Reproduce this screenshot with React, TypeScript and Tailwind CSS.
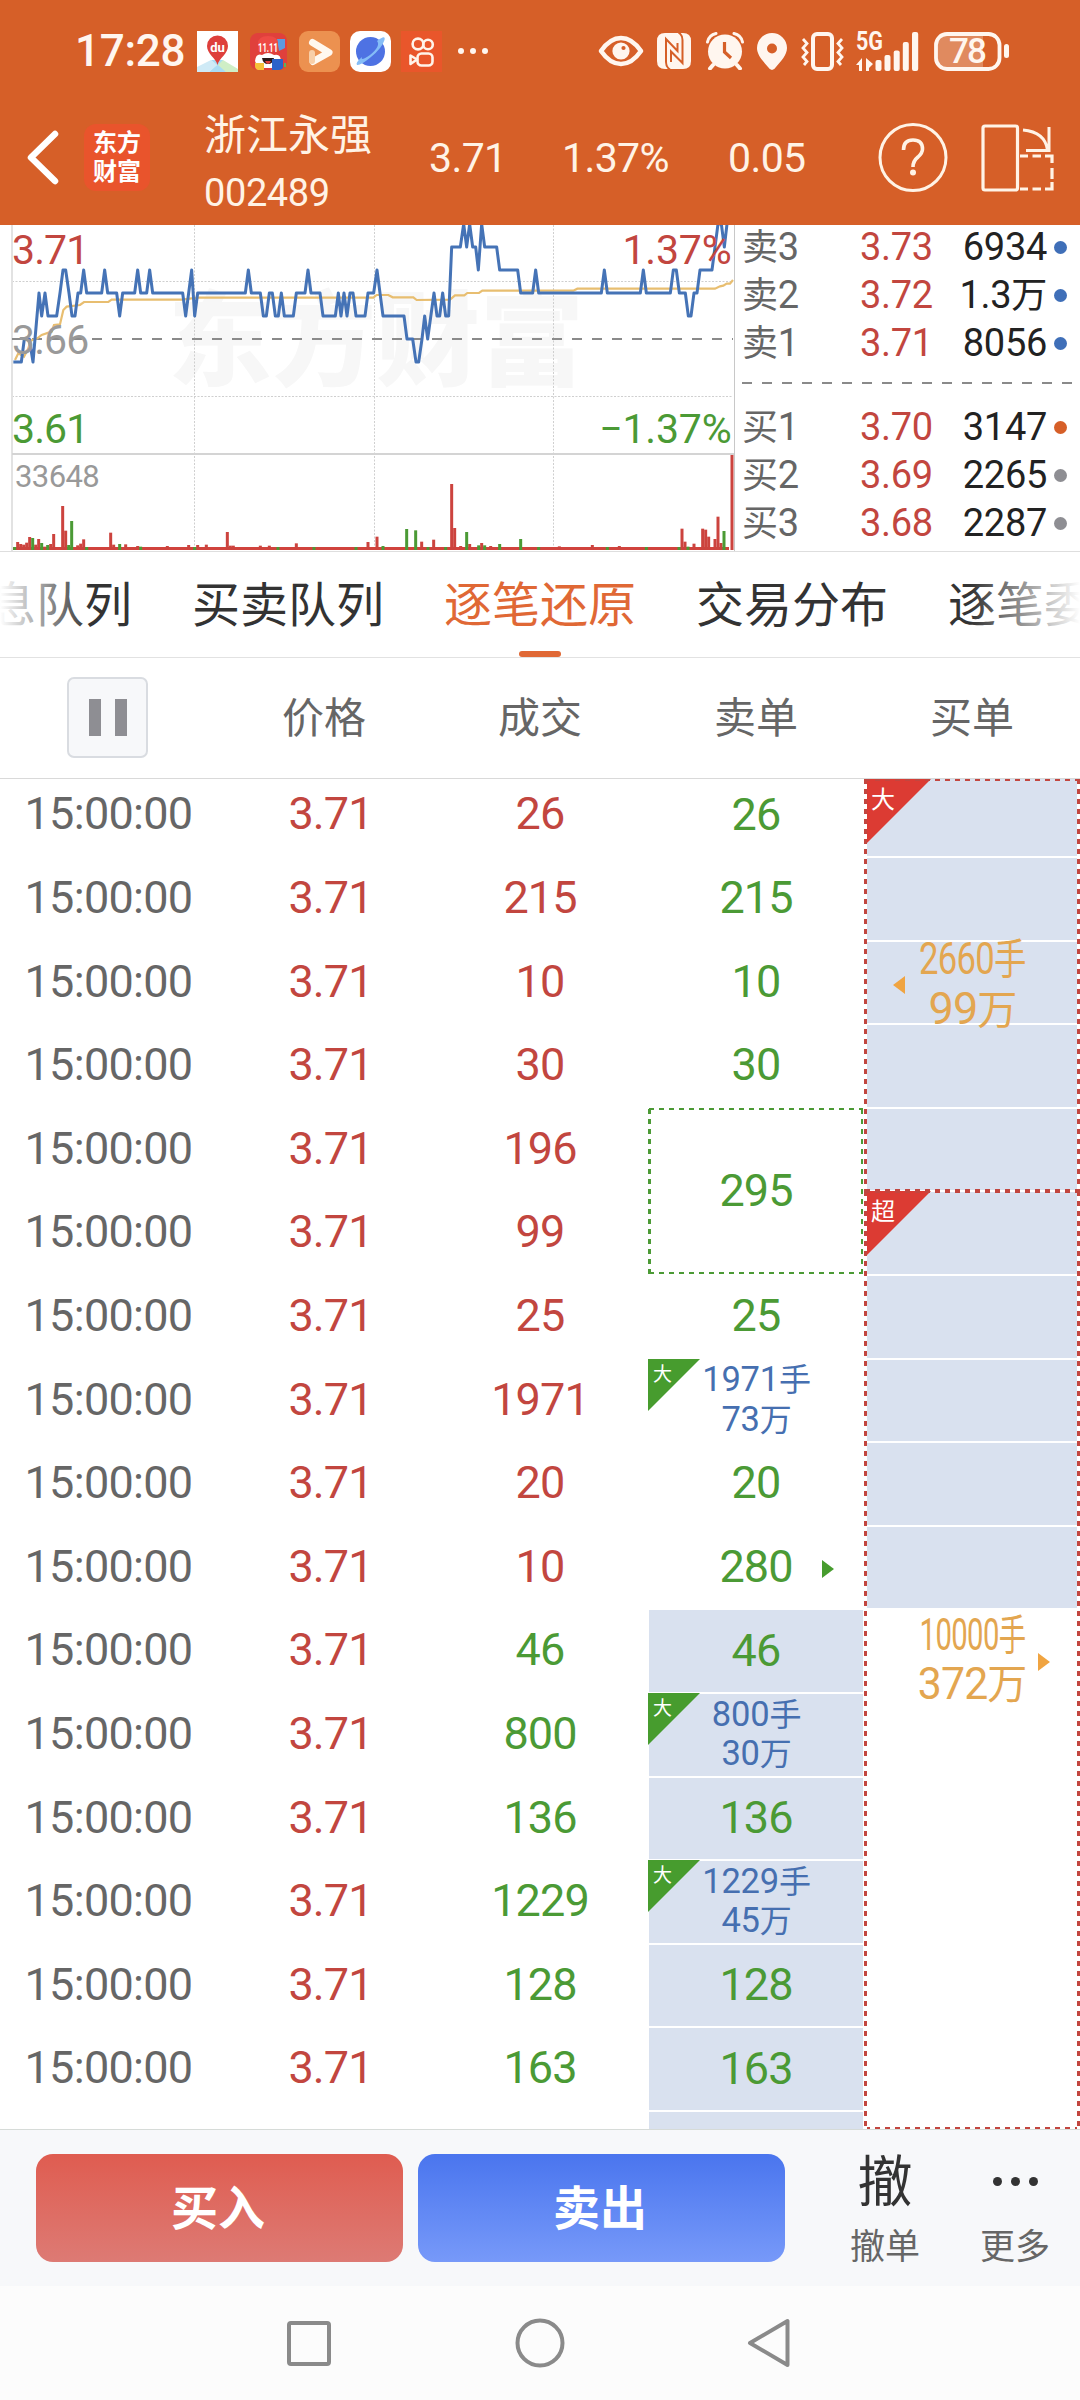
import type { ReactNode } from 'react';

type Side = 'buy' | 'sell';

interface Trade {
  time: string;
  price: string;
  volume: string;
  side: Side;
}

interface SellCell {
  text: string;
  amount?: string;
  rows?: number;
  arrow?: boolean;
  shaded?: boolean;
}

const volumes: [string, Side][] = [
  ['26', 'buy'], ['215', 'buy'], ['10', 'buy'], ['30', 'buy'], ['196', 'buy'], ['99', 'buy'],
  ['25', 'buy'], ['1971', 'buy'], ['20', 'buy'], ['10', 'buy'], ['46', 'sell'], ['800', 'sell'],
  ['136', 'sell'], ['1229', 'sell'], ['128', 'sell'], ['163', 'sell'],
];

const trades: Trade[] = volumes.map(([volume, side]) => ({ time: '15:00:00', price: '3.71', volume, side }));

const sellCells: SellCell[] = [
  { text: '26' },
  { text: '215' },
  { text: '10' },
  { text: '30' },
  { text: '295', rows: 2 },
  { text: '25' },
  { text: '1971', amount: '73' },
  { text: '20' },
  { text: '280', arrow: true },
  { text: '46', shaded: true },
  { text: '800', amount: '30', shaded: true },
  { text: '136', shaded: true },
  { text: '1229', amount: '45', shaded: true },
  { text: '128', shaded: true },
  { text: '163', shaded: true },
  { text: '', shaded: true },
];

const asks = [
  { label: '卖3', price: '3.73', amount: '6934', dot: 'bg-[#3f6fb8]' },
  { label: '卖2', price: '3.72', amount: '1.3万', dot: 'bg-[#3f6fb8]' },
  { label: '卖1', price: '3.71', amount: '8056', dot: 'bg-[#3f6fb8]' },
];

const bids = [
  { label: '买1', price: '3.70', amount: '3147', dot: 'bg-[#d65f28]' },
  { label: '买2', price: '3.69', amount: '2265', dot: 'bg-[#8e8e93]' },
  { label: '买3', price: '3.68', amount: '2287', dot: 'bg-[#8e8e93]' },
];

// [x in thirds of a pixel, ticks above the previous close]
const priceSeries = [
  [40, -1], [64, -1], [73, 0], [88, 0], [99, -1], [117, 2], [125, 1], [135, 2], [144, 1], [170, 1],
  [180, 2], [189, 3], [197, 3], [207, 2], [216, 1], [225, 1], [234, 2], [242, 2], [251, 3], [260, 2],
  [305, 2], [314, 3], [323, 2], [350, 2], [359, 1], [368, 2], [404, 2], [413, 3], [422, 2], [440, 2],
  [449, 3], [458, 2], [548, 2], [557, 1], [575, 3], [584, 1], [593, 2], [736, 2], [745, 3], [754, 2],
  [781, 2], [790, 1], [799, 1], [808, 2], [817, 2], [826, 1], [835, 1], [844, 2], [853, 1], [880, 1],
  [889, 2], [915, 2], [924, 3], [933, 2], [960, 2], [969, 1], [1006, 1], [1015, 2], [1023, 1], [1032, 2],
  [1041, 1], [1050, 2], [1059, 2], [1068, 1], [1095, 1], [1104, 2], [1121, 2], [1131, 3], [1149, 1], [1212, 1],
  [1221, 0], [1238, 0], [1248, -1], [1256, -1], [1266, 0], [1274, 1], [1283, 0], [1302, 2], [1311, 1], [1319, 1],
  [1328, 2], [1337, 1], [1346, 1], [1355, 4], [1381, 4], [1391, 5], [1400, 4], [1409, 5], [1418, 4], [1427, 4],
  [1435, 3], [1445, 5], [1454, 4], [1490, 4], [1499, 3], [1553, 3], [1562, 2], [1598, 2], [1607, 3], [1616, 2],
  [1804, 2], [1813, 3], [1822, 2], [1921, 2], [1930, 3], [1939, 2], [2011, 2], [2020, 3], [2029, 3], [2038, 2],
  [2056, 2], [2065, 1], [2073, 1], [2082, 2], [2091, 2], [2100, 3], [2136, 3], [2145, 4], [2154, 5], [2164, 5],
  [2173, 4], [2181, 5],
];

// [x, y] in thirds of a pixel
const averageSeries = [
  [45, 405], [55, 385], [72, 395], [85, 370], [92, 347], [112, 340], [125, 330], [155, 320], [162, 300], [180, 298],
  [190, 255], [200, 245], [240, 240], [252, 231], [325, 231], [335, 224], [545, 224], [593, 218], [1120, 218], [1130, 210],
  [1165, 210], [1178, 217], [1240, 217], [1250, 225], [1350, 224], [1365, 211], [1393, 211], [1402, 204], [1437, 204], [1447, 197],
  [1720, 197], [1732, 191], [2145, 191], [2160, 184], [2170, 182], [2180, 176], [2190, 176], [2199, 165],
];

// [x, height] in thirds of a pixel
const upBars = [
  [53, 24], [62, 18], [71, 16], [80, 22], [89, 39], [107, 16], [116, 33], [134, 10], [152, 18], [161, 48],
  [188, 132], [197, 58], [233, 14], [242, 19], [251, 32], [332, 52], [341, 16], [377, 17], [413, 12], [502, 12],
  [566, 15], [593, 15], [619, 16], [682, 54], [691, 13], [700, 13], [781, 13], [808, 13], [889, 20], [1104, 24],
  [1131, 40], [1265, 25], [1301, 31], [1355, 198], [1364, 66], [1382, 12], [1409, 18], [1445, 21], [1472, 12], [1678, 11],
  [1777, 15], [1858, 12], [2046, 64], [2055, 25], [2082, 19], [2108, 64], [2117, 61], [2126, 40], [2145, 33], [2154, 100],
  [2163, 21], [2196, 285],
];
const downBars = [
  [44, 9], [98, 36], [125, 21], [143, 15], [206, 15], [215, 87], [260, 9], [359, 18], [422, 10], [584, 9],
  [834, 9], [942, 9], [1068, 9], [1149, 12], [1220, 63], [1247, 59], [1284, 9], [1337, 9], [1400, 54], [1436, 14],
  [1454, 14], [1499, 18], [1562, 33], [1616, 9], [1822, 9], [1939, 9], [2037, 9], [2064, 10], [2172, 57],
];

const pricePoints = priceSeries.map(([x, t]) => `${x / 3},${114 - t * 23}`).join(' ');
const averagePoints = averageSeries.map(([x, y]) => `${x / 3},${y / 3}`).join(' ');

function StatusBar() {
  return (
    <div className="flex h-[102px] items-center pl-[75px] pr-[70px] text-[#fff6ef]">
      <span className="w-[122px] text-[44px] font-medium leading-none tracking-[-0.3px]">17:28</span>
      <div className="flex items-center gap-[10px]">
        <svg width="41" height="41" viewBox="0 0 41 41">
          <rect width="41" height="41" fill="#fff" />
          <path d="M0 36 L14 29 L20 34 L12 41 H0Z" fill="#cfeaf6" />
          <path d="M14 29 H26 L29 41 H12 L20 34Z" fill="#a9dcf3" />
          <path d="M26 29 L41 38 V41 H29 L21 34Z" fill="#cfeec6" />
          <path d="M20.500 34 C19 27 10 23 10 15 A10.500 10.500 0 0 1 31 15 C31 23 22 27 20.500 34Z" fill="#de3f3b" />
          <text x="20.500" y="21" fontSize="13" fontWeight="700" textAnchor="middle" fill="#fff">du</text>
        </svg>
        <svg width="41" height="41" viewBox="0 0 41 41">
          <rect x="2" y="2" width="37" height="37" rx="8" fill="#e0403c" />
          <path d="M29 8 h8 v9 l-6 3z" fill="#5b9be0" />
          <path d="M10 20 V13 Q10 5 20 5 Q30 5 30 13 V20Z" fill="#ee4a45" />
          <text x="20" y="21" fontSize="12" fontWeight="700" textAnchor="middle" fill="#fff" textLength="20" lengthAdjust="spacingAndGlyphs">11.11</text>
          <path d="M7 30 Q8 22 14 24 Q20 20 26 24 Q33 22 33 31 L28 37 H10Z" fill="#fff" />
          <path d="M14 27 h12 q-1 6 -6 6 q-5 0 -6 -6z" fill="#2b1a1a" />
          <path d="M17 30 h6 q-1 3 -3 3 q-2 0 -3 -3z" fill="#e0403c" />
          <path d="M7 32 h9 v7 h-6 q-3 -1 -3 -4z" fill="#f6c13a" />
          <path d="M24 28 h11 v9 q-2 2 -4 2 h-7z" fill="#2c62c9" />
          <path d="M36 32 h2 v4 h-2z" fill="#58b35c" />
        </svg>
        <svg width="41" height="41" viewBox="0 0 41 41">
          <rect width="41" height="41" rx="9" fill="#ec9150" />
          <path d="M13.500 11.500 L30 21.500 L14 30.500" stroke="#fff8ef" strokeWidth="7" fill="none" strokeLinecap="round" strokeLinejoin="round" />
          <path d="M13 22 v8" stroke="#f8cfa8" strokeWidth="6" strokeLinecap="round" />
        </svg>
        <svg width="41" height="41" viewBox="0 0 41 41">
          <rect width="41" height="41" rx="10" fill="#fff" />
          <circle cx="20.500" cy="20.500" r="14.500" fill="#4e72e3" />
          <path d="M27 10 Q36 3 34.500 9 Q32 17 21 26 Q10 35 7 34 Q5 32 12 26 Q10 31 20 24 Q31 15 27 10Z" fill="#85bdf7" />
        </svg>
        <svg width="41" height="41" viewBox="0 0 41 41" fill="none" stroke="#fff3ea" strokeWidth="2.600">
          <rect width="41" height="41" fill="#e9562b" stroke="none" />
          <circle cx="17" cy="13" r="5.400" />
          <circle cx="27" cy="13.500" r="4.800" />
          <rect x="16.500" y="22.500" width="15" height="12" rx="4" />
          <path d="M16 28.500 L9.500 24.500 V33Z" strokeLinejoin="round" />
        </svg>
      </div>
      <div className="ml-[16px] flex gap-[6px]">
        <span className="size-[6px] rounded-full bg-[#fff6ef]" />
        <span className="size-[6px] rounded-full bg-[#fff6ef]" />
        <span className="size-[6px] rounded-full bg-[#fff6ef]" />
      </div>

      <div className="ml-auto flex items-center">
        <svg className="mr-[13px]" width="46" height="32" viewBox="0 0 46 32">
          <path d="M3 16 Q12 3 23 3 Q34 3 43 16 Q34 29 23 29 Q12 29 3 16Z" fill="none" stroke="currentColor" strokeWidth="4.600" strokeLinejoin="round" />
          <circle cx="23" cy="16" r="8.600" fill="currentColor" />
          <circle cx="25.500" cy="13" r="2.100" fill="#d65f28" />
        </svg>
        <svg className="mr-[15px]" width="34" height="36" viewBox="0 0 34 36">
          <path d="M8 0 H26 Q34 0 34 8 V28 Q34 36 26 36 H8 Q0 36 0 28 V8 Q0 0 8 0Z" fill="currentColor" />
          <path d="M13 36.500 Q9 34 9 29 V6 L20.500 18 V10 M21.500 -0.500 Q25.500 2 25.500 7 V30 L14 18.500 V29" stroke="#d65f28" strokeWidth="2" fill="none" />
        </svg>
        <svg className="mr-[13px]" width="38" height="38" viewBox="0 0 38 38">
          <circle cx="19" cy="19.500" r="17" fill="currentColor" />
          <path d="M1.500 10 Q3 3 10 1.500 M36.500 10 Q35 3 28 1.500" stroke="currentColor" strokeWidth="3" fill="none" strokeLinecap="round" />
          <path d="M7 33 L4 36.500 M31 33 L34 36.500" stroke="currentColor" strokeWidth="4" strokeLinecap="round" />
          <path d="M18.500 10 V20 L25 26" stroke="#d65f28" strokeWidth="3.200" fill="none" />
        </svg>
        <svg className="mr-[14px]" width="30" height="37" viewBox="0 0 30 37">
          <path d="M15 37 Q13 37 11 34 C6 28 0 22 0 15 A15 15 0 0 1 30 15 C30 22 24 28 19 34 Q17 37 15 37Z" fill="currentColor" />
          <circle cx="15" cy="15.500" r="5" fill="#d65f28" />
        </svg>
        <svg className="mr-[12px]" width="43" height="39" viewBox="0 0 43 39" fill="none" stroke="currentColor">
          <rect x="12" y="2" width="19" height="35" rx="4" strokeWidth="4" />
          <path d="M2 7 L6 11.500 L2 16 L6 20.500 L2 25 L6 29.500 L3 33 M41 7 L37 11.500 L41 16 L37 20.500 L41 25 L37 29.500 L40 33" strokeWidth="2.800" />
        </svg>
        <div className="relative mr-[15px] h-[39px] w-[63px]">
          <svg width="63" height="39" viewBox="0 0 63 39" fill="currentColor">
            <path d="M6 26 V39 H3 V33 H0Z M10 26 L17 32 L13 36 V39 H10Z" />
            <rect x="19.500" y="28" width="6" height="11" rx="2" />
            <rect x="28.500" y="23" width="6" height="16" rx="2" />
            <rect x="37.700" y="18.500" width="6" height="20.500" rx="2" />
            <rect x="46.800" y="10" width="6" height="29" rx="2" />
            <rect x="56" y="0" width="6.200" height="39" rx="2" />
          </svg>
          <span className="absolute left-0 top-[-5px] origin-left scale-x-[0.86] text-[25px] font-bold leading-[30px]">5G</span>
        </div>
        <div className="relative h-[39px] w-[76px]">
          <svg width="76" height="39" viewBox="0 0 76 39">
            <path d="M10 3 H49 V36 H10 Q3 34 3 27 V10 Q3 4 10 3Z" fill="#e08a5f" />
            <rect x="2" y="2" width="63.500" height="35" rx="11" fill="none" stroke="currentColor" strokeWidth="3.800" />
            <rect x="70" y="12" width="5" height="14" rx="2.500" fill="currentColor" />
          </svg>
          <span className="absolute left-0 top-[-2px] w-[66px] text-center text-[35px] font-medium leading-[43px] tracking-[-2px]">78</span>
        </div>
      </div>
    </div>
  );
}

function TitleBar() {
  return (
    <div className="flex h-[123px] pl-[26px] text-[#fff3e6]">
      <svg className="mt-[26px] shrink-0" width="36" height="60" viewBox="0 0 36 60">
        <path d="M29 6 L5 29.500 L29 53" fill="none" stroke="#fff" strokeWidth="6.500" strokeLinecap="round" strokeLinejoin="round" />
      </svg>
      <div className="ml-[22px] mt-[22px] flex h-[67px] w-[66px] shrink-0 flex-col items-center justify-center rounded-[12px] bg-[#e9542c] text-[24px] font-bold leading-[29px] text-white">
        <span>东方</span>
        <span>财富</span>
      </div>
      <div className="ml-[54px] w-[225px]">
        <p className="mt-[10px] text-[42px] leading-[48px]">浙江永强</p>
        <p className="mt-[9px] text-[38px] leading-[48px] tracking-[-0.4px]">002489</p>
      </div>
      <div className="flex h-[113px] items-center text-[41px] tracking-[-0.6px]">
        <span className="w-[133px]">3.71</span>
        <span className="w-[166px]">1.37%</span>
        <span className="w-[150px]">0.05</span>
      </div>
      <svg className="mt-[20px]" width="70" height="70" viewBox="0 0 70 70">
        <circle cx="35" cy="35.500" r="33" fill="none" stroke="currentColor" strokeWidth="3" />
        <path d="M25.500 28 Q25.500 18 35 18 Q44.500 18 44.500 27 Q44.500 31 40 35 Q35 39 35 45" fill="none" stroke="currentColor" strokeWidth="3.600" />
        <circle cx="35" cy="50.500" r="3" fill="currentColor" />
      </svg>
      <svg className="ml-[33px] mt-[21px]" width="74" height="70" viewBox="0 0 74 70" fill="none" stroke="currentColor" strokeWidth="3.200">
        <rect x="2" y="3" width="34.500" height="64" rx="2" />
        <path d="M42 7 Q64 9 66.500 27 M68 4 V27.500 H45" strokeWidth="3" />
        <path d="M39 33 H47 M51.500 33 H60 M64 33 H71 V40 M71 45 V56 M71 59 V66 H64 M60 66 H51.500 M47 66 H39" />
      </svg>
    </div>
  );
}

function Chart() {
  return (
    <div className="relative h-[326px] w-[735px] shrink-0">
      <svg width="735" height="326" viewBox="0 0 735 326" className="block">
        <text x="168" y="153" fontSize="103" fontWeight="900" fill="#f7f7f7" textLength="416" lengthAdjust="spacingAndGlyphs">东方财富</text>
        <path d="M12 56.500 H733 M12 171.500 H733 M194.500 0 V325 M374.500 0 V325 M553.500 0 V325" stroke="#cfcfcf" strokeWidth="1" strokeDasharray="2 1.500" />
        <path d="M12 0 V326" stroke="#e2e2e2" strokeWidth="2" />
        <path d="M734.500 0 V326" stroke="#c8c8c8" strokeWidth="1" />
        <path d="M12 229 H734" stroke="#d4d4d4" strokeWidth="2" />
        <path d="M12 114 H733" stroke="#8a8a8a" strokeWidth="2" strokeDasharray="10 10" />
        <polyline points={averagePoints} fill="none" stroke="#e8be70" strokeWidth="2.200" />
        <rect x="13" y="322" width="716" height="3" fill="#d0433d" />
        {upBars.map(([x, h]) => (
          <rect key={x} x={x / 3 - 1.5} y={325 - h / 3} width="3" height={h / 3} fill="#cc433e" />
        ))}
        {downBars.map(([x, h]) => (
          <rect key={x} x={x / 3 - 1.5} y={325 - h / 3} width="3" height={h / 3} fill="#4b9a35" />
        ))}
        <polyline points={pricePoints} fill="none" stroke="#4573b6" strokeWidth="3" strokeLinejoin="round" />
        <g fontSize="41" letterSpacing="-0.9">
          <text x="12" y="39" fill="#c2463f">3.71</text>
          <text x="12" y="128.500" fill="#999">3.66</text>
          <text x="12" y="217.500" fill="#4b9a35">3.61</text>
        </g>
        <g fontSize="41" letterSpacing="-0.2">
          <text x="731.500" y="39" textAnchor="end" fill="#c2463f">1.37%</text>
          <text x="731.500" y="217.500" textAnchor="end" fill="#4b9a35">−1.37%</text>
        </g>
        <text x="15" y="261.500" fontSize="31" letterSpacing="-0.6" fill="#999">33648</text>
      </svg>
    </div>
  );
}

function QuoteRow({ label, price, amount, dot }: { label: string; price: string; amount: string; dot: string }) {
  const inWan = amount.endsWith('万');

  return (
    <div className="flex h-[48px] items-center text-[38px] leading-[48px] tracking-[-0.3px]">
      <span className="w-[118px] text-[#666]">
        <span className="text-[36px]">{label[0]}</span>
        {label[1]}
      </span>
      <span className="w-[76px] text-[#c2463f]">{price}</span>
      <span className="w-[111px] text-right text-[#222]">
        {inWan ? amount.slice(0, -1) : amount}
        {inWan && <span className="text-[36px]">万</span>}
      </span>
      <span className={`ml-[7px] size-[13px] rounded-full ${dot}`} />
    </div>
  );
}

function OrderBook() {
  return (
    <div className="pl-[7px]">
      <div className="-mt-[2px]">
        {asks.map((row) => (
          <QuoteRow key={row.label} {...row} />
        ))}
      </div>
      <div className="mb-[19px] mt-[15px] h-[2px] w-[332px] bg-[repeating-linear-gradient(to_right,#8a8a8a_0_10px,transparent_10px_20px)]" />
      {bids.map((row) => (
        <QuoteRow key={row.label} {...row} />
      ))}
    </div>
  );
}

function Tabs() {
  return (
    <nav className="relative flex h-[106px] overflow-hidden border-b border-[#e2e2e2] text-[48px] leading-[108px] text-[#333]">
      <div className="-ml-[12px] flex h-[105px] shrink-0 gap-[60px] whitespace-nowrap">
        <span>息队列</span>
        <span>买卖队列</span>
        <span className="relative text-[#e06835]">
          逐笔还原
          <span className="absolute bottom-0 left-[75px] h-[6px] w-[42px] rounded-[3px] bg-[#e06835]" />
        </span>
        <span>交易分布</span>
        <span>逐笔委</span>
      </div>
      <div className="absolute inset-y-0 left-0 w-[90px] bg-linear-to-r from-white to-white/0" />
      <div className="absolute inset-y-0 right-0 w-[110px] bg-linear-to-l from-white to-white/0" />
    </nav>
  );
}

function TableHead() {
  return (
    <div className="grid h-[121px] grid-cols-5 items-center border-b border-[#d9d9d9] text-center text-[42px] text-[#666]">
      <div className="-mt-[2px] ml-[67px] flex size-[81px] items-center justify-center gap-[14px] rounded-[7px] border-2 border-[#d9dce1] bg-[#f7f8fa]">
        <span className="h-[37px] w-[12px] bg-[#8e8e93]" />
        <span className="h-[37px] w-[12px] bg-[#8e8e93]" />
      </div>
      <span className="pt-px">价格</span>
      <span className="pt-px">成交</span>
      <span className="pt-px">卖单</span>
      <span className="pt-px">买单</span>
    </div>
  );
}

function GreenDashes() {
  return (
    <>
      <span className="absolute inset-x-0 top-[-1px] h-[2px] bg-[repeating-linear-gradient(to_right,#4b9a35_0_5px,transparent_5px_10px)]" />
      <span className="absolute inset-x-0 bottom-0 h-[2px] bg-[repeating-linear-gradient(to_right,#4b9a35_0_5px,transparent_5px_10px)]" />
      <span className="absolute inset-y-0 left-[-1px] w-[3px] bg-[repeating-linear-gradient(to_bottom,#4b9a35_0_5px,transparent_5px_10px)]" />
      <span className="absolute inset-y-0 right-0 w-[2px] bg-[repeating-linear-gradient(to_bottom,#4b9a35_0_5px,transparent_5px_10px)]" />
    </>
  );
}

function RedDashes() {
  return (
    <>
      <span className="absolute inset-x-0 top-0 h-[2px] bg-[repeating-linear-gradient(to_right,#c2463f_0_5px,transparent_5px_10px)]" />
      <span className="absolute inset-x-0 bottom-0 h-[2px] bg-[repeating-linear-gradient(to_right,#c2463f_0_5px,transparent_5px_10px)]" />
      <span className="absolute inset-y-0 left-[-1px] w-[3px] bg-[repeating-linear-gradient(to_bottom,#c2463f_0_5px,white_5px_10px)]" />
      <span className="absolute inset-y-0 right-0 w-[3px] bg-[repeating-linear-gradient(to_bottom,#c2463f_0_5px,white_5px_10px)]" />
    </>
  );
}

function SellColumn() {
  return (
    <div className="pl-px pr-[2px]">
      {sellCells.map((cell, i) => (
        <div
          key={i}
          className={`relative flex flex-col items-center justify-center border-y border-white pb-px text-[45px] leading-[48px] tracking-[-0.9px] text-[#4b9a35] ${
            cell.rows ? 'h-[167.2px]' : 'h-[83.6px]'
          } ${cell.shaded ? 'bg-[#d9e1ef]' : ''}`}
        >
          {cell.rows && <GreenDashes />}
          {cell.amount ? (
            <div className="pl-px text-center text-[34.5px] leading-[38.5px] tracking-[-0.2px] text-[#466fb0]">
              <p>{cell.text}<span className="text-[32px]">手</span></p>
              <p>{cell.amount}<span className="text-[32px]">万</span></p>
              <svg className="absolute left-[-1px] top-[-1px]" width="52" height="52" viewBox="0 0 52 52">
                <path d="M0 0 H52 L0 52Z" fill="#479c2e" />
                <text x="5" y="22" fontSize="19" fill="#fff" letterSpacing="0">大</text>
              </svg>
            </div>
          ) : (
            cell.text
          )}
          {cell.arrow && (
            <svg className="absolute left-[173px] top-[33px]" width="12" height="18" viewBox="0 0 12 18">
              <path d="M0 0 L12 9 L0 18Z" fill="#479c2e" />
            </svg>
          )}
        </div>
      ))}
    </div>
  );
}

interface BuyOrderProps {
  tag: string;
  className: string;
  cellsClassName: string;
  children: ReactNode;
}

function BuyOrder({ tag, className, cellsClassName, children }: BuyOrderProps) {
  return (
    <div className={`relative flex flex-col items-center justify-center text-[45px] leading-[48.5px] tracking-[-0.9px] text-[#e3a650] ${className}`}>
      <div className={`absolute inset-0 flex flex-col overflow-hidden ${cellsClassName}`}>
        {[0, 1, 2, 3, 4].map((n) => (
          <span key={n} className="h-[83.6px] shrink-0 border-y border-white bg-[#d9e1ef]" />
        ))}
      </div>
      <svg className="absolute left-0 top-0" width="66" height="66" viewBox="0 0 66 66">
        <path d="M0 0 H66 L0 66Z" fill="#dc3b33" />
        <text x="6" y="28.500" fontSize="24" fill="#fff" letterSpacing="0">{tag}</text>
      </svg>
      <RedDashes />
      <div className="relative flex flex-col items-center">{children}</div>
    </div>
  );
}

function TradeList() {
  return (
    <div className="grid h-[1350px] grid-cols-[648px_217px_215px] overflow-hidden">
      <div className="-mt-[5.6px]">
        {trades.map((t, i) => (
          <div key={i} className="grid h-[83.6px] grid-cols-3 items-center pb-[2px] text-center text-[45px] tracking-[-0.9px]">
            <span className="pl-px tracking-[-0.7px] text-[#666]">{t.time}</span>
            <span className="pl-[13px] text-[#c2463f]">{t.price}</span>
            <span className={t.side === 'buy' ? 'text-[#c2463f]' : 'text-[#4b9a35]'}>{t.volume}</span>
          </div>
        ))}
      </div>
      <div className="-mt-[5.6px]">
        <SellColumn />
      </div>
      <div>
        <BuyOrder tag="大" className="h-[412.4px]" cellsClassName="justify-end">
          <p className="scale-x-[0.77] whitespace-nowrap">2660<span className="text-[42px]">手</span></p>
          <p>99<span className="text-[40px]">万</span></p>
          <svg className="absolute left-[-10px] top-[41px]" width="12" height="18" viewBox="0 0 12 18">
            <path d="M12 0 L0 9 L12 18Z" fill="#f0a441" />
          </svg>
        </BuyOrder>
        <BuyOrder tag="超" className="h-[937.6px]" cellsClassName="justify-start">
          <p className="scale-x-[0.65] whitespace-nowrap">10000<span className="text-[42px]">手</span></p>
          <p className="scale-x-[0.95]">372<span className="text-[42px]">万</span></p>
          <svg className="absolute right-[4px] top-[42px]" width="12" height="18" viewBox="0 0 12 18">
            <path d="M0 0 L12 9 L0 18Z" fill="#f0a441" />
          </svg>
        </BuyOrder>
      </div>
    </div>
  );
}

function ActionBar() {
  return (
    <div className="flex h-[157px] border-t border-[#d6dbd8] bg-[#f7f8fa] pl-[36px] pt-[24px]">
      <button className="h-[108px] w-[367px] rounded-[17px] bg-linear-to-b from-[#df5c50] to-[#dd7a74] pr-[3px] text-[47px] font-bold leading-none text-white">
        买入
      </button>
      <button className="ml-[15px] h-[108px] w-[367px] rounded-[17px] bg-linear-to-b from-[#4a75ee] to-[#7799f9] pr-[3px] text-[47px] font-bold leading-none text-white">
        卖出
      </button>
      <div className="ml-[35px] flex w-[130px] flex-col items-center">
        <span className="mt-px text-[55px] leading-[54px] text-[#333]">撤</span>
        <span className="mt-[19px] text-[35px] leading-[40px] text-[#666]">撤单</span>
      </div>
      <div className="flex w-[130px] flex-col items-center">
        <span className="flex h-[54px] items-center gap-[9px]">
          <span className="size-[9px] rounded-full bg-[#333]" />
          <span className="size-[9px] rounded-full bg-[#333]" />
          <span className="size-[9px] rounded-full bg-[#333]" />
        </span>
        <span className="mt-[20px] text-[35px] leading-[40px] text-[#666]">更多</span>
      </div>
    </div>
  );
}

function SystemNav() {
  return (
    <div className="flex h-[114px] items-center justify-center gap-[180px] bg-[#fcfcfc]">
      <svg width="50" height="50" viewBox="0 0 50 50" fill="none" stroke="#8a8a8a" strokeWidth="4">
        <rect x="4" y="5" width="40" height="41" rx="2" />
      </svg>
      <svg width="50" height="50" viewBox="0 0 50 50" fill="none" stroke="#8a8a8a" strokeWidth="4">
        <circle cx="25" cy="25" r="22.500" />
      </svg>
      <svg width="50" height="50" viewBox="0 0 50 50" fill="none" stroke="#8a8a8a" strokeWidth="4" strokeLinejoin="round">
        <path d="M5 25 L42.500 3 V47Z" />
      </svg>
    </div>
  );
}

export default function App() {
  return (
    <div className="h-[2400px] w-[1080px] overflow-hidden bg-white [font-family:Roboto,'Noto_Sans_CJK_SC',sans-serif]">
      <header className="h-[225px] bg-[#d65f28]">
        <StatusBar />
        <TitleBar />
      </header>
      <section className="flex h-[327px] overflow-hidden border-b border-[#dedede]">
        <Chart />
        <OrderBook />
      </section>
      <Tabs />
      <TableHead />
      <TradeList />
      <ActionBar />
      <SystemNav />
    </div>
  );
}
